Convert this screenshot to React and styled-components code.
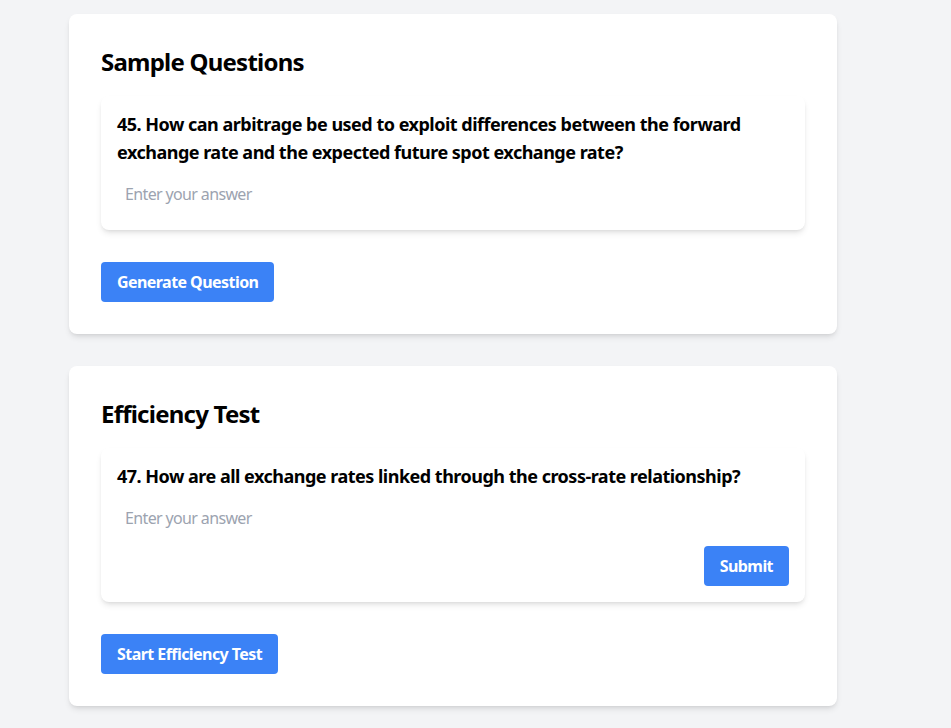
import React, { useState } from "react";
import styled, { createGlobalStyle } from "styled-components";

const GlobalStyle = createGlobalStyle`
  body {
    margin: 0;
    background: #f3f4f6;
    font-family: "Segoe UI", "Noto Sans", "Open Sans", sans-serif;
    color: #000;
  }
`;

const App = () => {
  const [sampleAnswer, setSampleAnswer] = useState("");
  const [testAnswer, setTestAnswer] = useState("");

  return (
    <Page>
      <GlobalStyle />
      <Card>
        <Title>Sample Questions</Title>
        <QuestionBox>
          <QuestionText>
            45. How can arbitrage be used to exploit differences between the
            forward exchange rate and the expected future spot exchange rate?
          </QuestionText>
          <AnswerInput
            placeholder="Enter your answer"
            value={sampleAnswer}
            onChange={(e) => setSampleAnswer(e.target.value)}
          />
        </QuestionBox>
        <Button>Generate Question</Button>
      </Card>
      <Card>
        <Title>Efficiency Test</Title>
        <QuestionBox>
          <QuestionText>
            47. How are all exchange rates linked through the cross-rate
            relationship?
          </QuestionText>
          <AnswerInput
            placeholder="Enter your answer"
            value={testAnswer}
            onChange={(e) => setTestAnswer(e.target.value)}
          />
          <SubmitRow>
            <Button>Submit</Button>
          </SubmitRow>
        </QuestionBox>
        <Button>Start Efficiency Test</Button>
      </Card>
    </Page>
  );
};

const Page = styled.div`
  display: flex;
  flex-direction: column;
  gap: 32px;
  padding: 14px 0 22px 69px;
`;

const Card = styled.div`
  width: 768px;
  box-sizing: border-box;
  padding: 32px;
  background: #fff;
  border-radius: 8px;
  box-shadow: 0 4px 6px -1px rgba(0, 0, 0, 0.1), 0 2px 4px -2px rgba(0, 0, 0, 0.1);
`;

const Title = styled.h2`
  margin: 0 0 18px;
  font-size: 24px;
  line-height: 32px;
  font-weight: 700;
  letter-spacing: -0.032em;
`;

const QuestionBox = styled.div`
  display: flex;
  flex-direction: column;
  padding: 14px 16px 16px;
  margin-bottom: 32px;
  background: #fff;
  border-radius: 8px;
  box-shadow: 0 4px 6px -1px rgba(0, 0, 0, 0.1), 0 2px 4px -2px rgba(0, 0, 0, 0.1);
`;

const QuestionText = styled.p`
  margin: 0 0 8px;
  font-size: 18px;
  line-height: 28px;
  font-weight: 700;
  letter-spacing: -0.028em;
`;

const AnswerInput = styled.input`
  width: 100%;
  box-sizing: border-box;
  height: 40px;
  padding: 8px;
  border: none;
  outline: none;
  font-family: inherit;
  font-size: 16px;
  letter-spacing: -0.04em;
  color: #111827;
  background: transparent;
  &::placeholder {
    color: #9ca3af;
  }
`;

const SubmitRow = styled.div`
  display: flex;
  justify-content: flex-end;
  margin-top: 8px;
`;

const Button = styled.button`
  align-self: flex-start;
  height: 40px;
  padding: 0 16px;
  border: none;
  border-radius: 4px;
  background: #3b82f6;
  color: #fff;
  font-family: inherit;
  font-size: 16px;
  font-weight: 700;
  letter-spacing: -0.035em;
  cursor: pointer;
`;

export default App;
